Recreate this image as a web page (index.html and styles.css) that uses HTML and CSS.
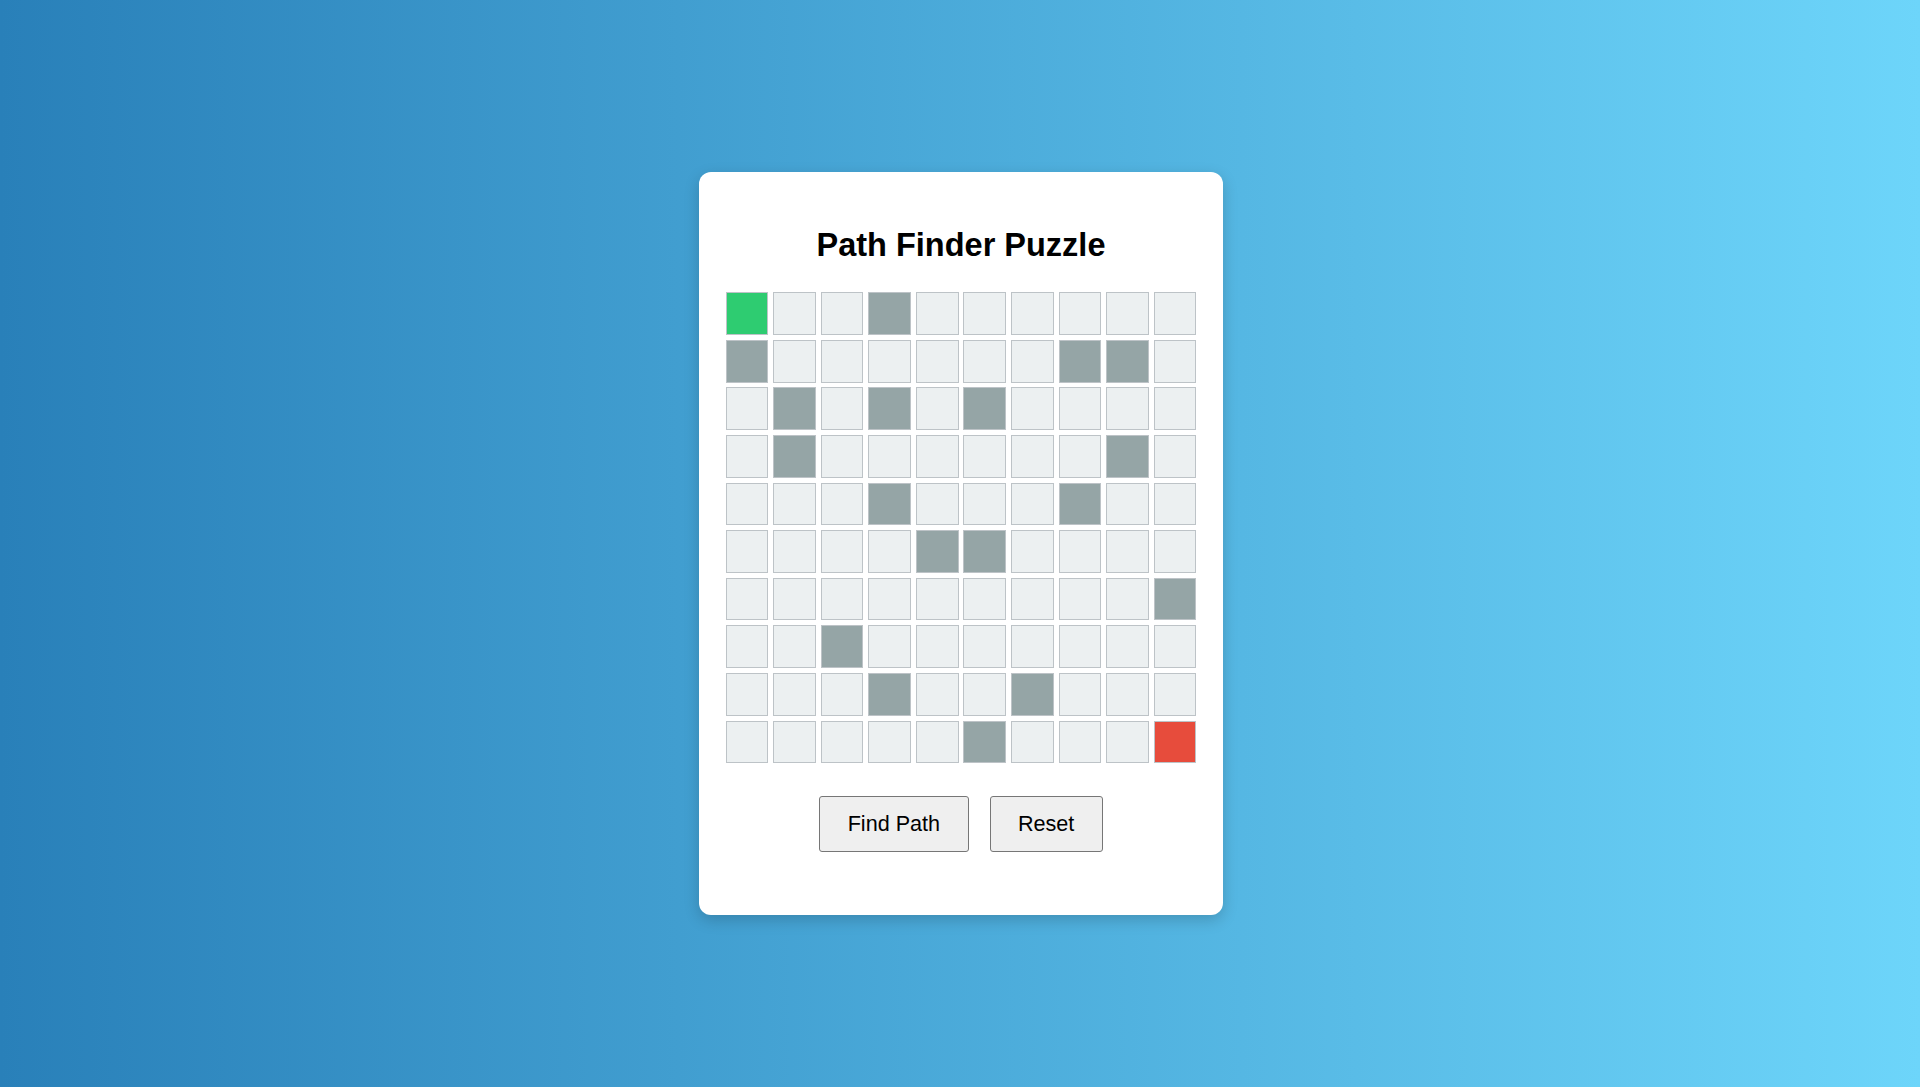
FILE: index.html
```html
<!DOCTYPE html>
<html lang="en">
<head>
<meta charset="utf-8">
<title>Path Finder Puzzle</title>
<link rel="stylesheet" href="styles.css">
</head>
<body>
<div class="card">
  <h1 class="title">Path Finder Puzzle</h1>
  <div class="grid">
    <div class="cell start"></div><div class="cell"></div><div class="cell"></div><div class="cell wall"></div><div class="cell"></div><div class="cell"></div><div class="cell"></div><div class="cell"></div><div class="cell"></div><div class="cell"></div>
    <div class="cell wall"></div><div class="cell"></div><div class="cell"></div><div class="cell"></div><div class="cell"></div><div class="cell"></div><div class="cell"></div><div class="cell wall"></div><div class="cell wall"></div><div class="cell"></div>
    <div class="cell"></div><div class="cell wall"></div><div class="cell"></div><div class="cell wall"></div><div class="cell"></div><div class="cell wall"></div><div class="cell"></div><div class="cell"></div><div class="cell"></div><div class="cell"></div>
    <div class="cell"></div><div class="cell wall"></div><div class="cell"></div><div class="cell"></div><div class="cell"></div><div class="cell"></div><div class="cell"></div><div class="cell"></div><div class="cell wall"></div><div class="cell"></div>
    <div class="cell"></div><div class="cell"></div><div class="cell"></div><div class="cell wall"></div><div class="cell"></div><div class="cell"></div><div class="cell"></div><div class="cell wall"></div><div class="cell"></div><div class="cell"></div>
    <div class="cell"></div><div class="cell"></div><div class="cell"></div><div class="cell"></div><div class="cell wall"></div><div class="cell wall"></div><div class="cell"></div><div class="cell"></div><div class="cell"></div><div class="cell"></div>
    <div class="cell"></div><div class="cell"></div><div class="cell"></div><div class="cell"></div><div class="cell"></div><div class="cell"></div><div class="cell"></div><div class="cell"></div><div class="cell"></div><div class="cell wall"></div>
    <div class="cell"></div><div class="cell"></div><div class="cell wall"></div><div class="cell"></div><div class="cell"></div><div class="cell"></div><div class="cell"></div><div class="cell"></div><div class="cell"></div><div class="cell"></div>
    <div class="cell"></div><div class="cell"></div><div class="cell"></div><div class="cell wall"></div><div class="cell"></div><div class="cell"></div><div class="cell wall"></div><div class="cell"></div><div class="cell"></div><div class="cell"></div>
    <div class="cell"></div><div class="cell"></div><div class="cell"></div><div class="cell"></div><div class="cell"></div><div class="cell wall"></div><div class="cell"></div><div class="cell"></div><div class="cell"></div><div class="cell end"></div>
  </div>
  <div class="controls">
    <button class="btn" type="button">Find Path</button>
    <button class="btn" type="button">Reset</button>
  </div>
</div>
</body>
</html>
```

FILE: styles.css
```css
html, body {
  margin: 0;
  padding: 0;
}

body {
  min-height: 100vh;
  display: flex;
  align-items: center;
  justify-content: center;
  background: linear-gradient(to right, #2980b9, #6dd5fa);
  font-family: "Liberation Sans", Arial, sans-serif;
}

.card {
  box-sizing: border-box;
  width: 524px;
  height: 743px;
  margin-left: 2px;
  padding: 55px 26px 0 26px;
  background: #ffffff;
  border-radius: 12px;
  box-shadow: 0 5px 15px rgba(0, 0, 0, 0.18);
  display: flex;
  flex-direction: column;
  align-items: center;
}

.title {
  margin: 0;
  font-size: 32.5px;
  line-height: 36.8px;
  font-weight: bold;
  color: #000000;
  text-align: center;
}

.grid {
  margin-top: 28.5px;
  display: grid;
  grid-template-columns: repeat(10, 42.7px);
  grid-auto-rows: 42.7px;
  gap: 4.9px;
}

.cell {
  box-sizing: border-box;
  background: #ecf0f1;
  border: 1.2px solid #bdc3c7;
}

.cell.wall {
  background: #95a5a6;
}

.cell.start {
  background: #2ecc71;
}

.cell.end {
  background: #e74c3c;
}

.controls {
  margin-top: 33px;
  display: flex;
  gap: 21px;
}

.btn {
  box-sizing: border-box;
  height: 56px;
  padding: 0 27.4px;
  font-family: "Liberation Sans", Arial, sans-serif;
  font-size: 21.6px;
  color: #000000;
  background: #efefef;
  border: 1.2px solid #767676;
  border-radius: 3px;
}
```
